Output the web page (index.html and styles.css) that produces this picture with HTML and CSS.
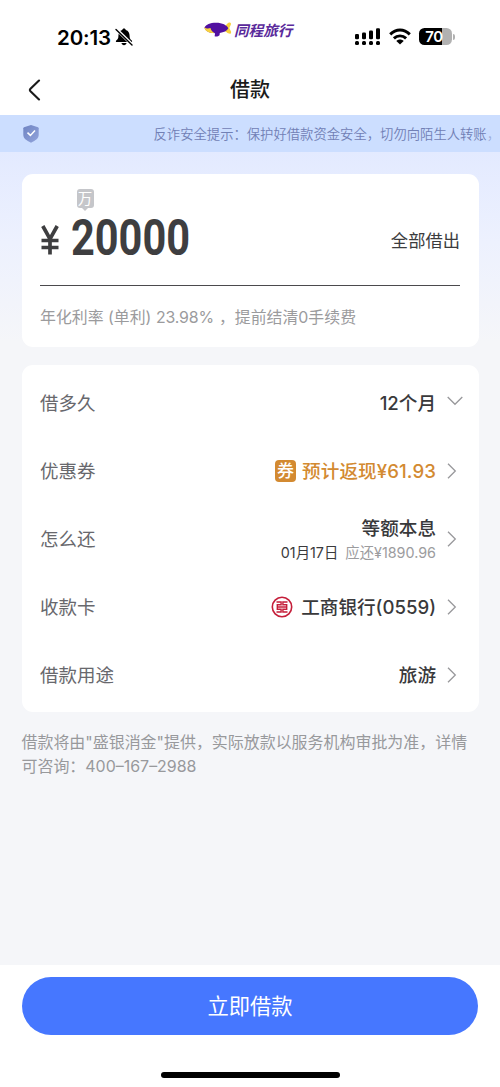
FILE: index.html
```html
<!DOCTYPE html>
<html lang="zh-CN">
<head>
<meta charset="utf-8">
<meta name="viewport" content="width=device-width, initial-scale=1">
<title>借款</title>
<link rel="stylesheet" href="styles.css">
</head>
<body>
<div class="app">
  <header class="status">
    <div class="status-left">
      <span class="clock">20:13</span>
      <svg class="bell" width="18" height="18" viewBox="0 0 18 18"><path d="M9 .6C8 .6 7.400 1.200 7.300 2 4.500 2.700 3.400 5 3.400 8c0 2.700-.8 3.300-2.200 4.500-.6.600-.4 1.600.6 1.600h14.400c1 0 1.200-1 .6-1.600-1.400-1.200-2.200-1.800-2.200-4.500 0-3-1.100-5.300-3.900-6C10.600 1.200 10 .6 9 .6zM6.500 15h5c-.2 1.300-1.200 2.200-2.500 2.200S6.700 16.300 6.500 15z" fill="#000"/><path d="M1.500 1.300l16 15.700" stroke="#fff" stroke-width="3.200"/><path d="M1 1.500l16 15.500" stroke="#000" stroke-width="1.400" stroke-linecap="round"/></svg>
    </div>
    <div class="brand">
      <svg width="28" height="15" viewBox="0 0 28 15"><path d="M19.500 6.500C22 4.500 22.500 1.200 25.300.6c1.700-.2 1.900 1 1.500 2.200L25.300 6l1.700 3.400c.5 1.600-.5 2.700-2 2.200-2.300-.7-3-2.600-5.500-3.200z" fill="#f8d13c"/><path d="M.5 5.500C2 2.500 6 .8 12 .8c6.500 0 10.800 2.400 12.300 5.500-1.200 2.700-4.600 4.200-8.500 4.600l-.3 2.400c-1.300 1.300-3.300 1.600-4.900 1l.5-3C5 11 1 9 .5 5.500z" fill="#5110a0"/><path d="M.3 5.200c1.800 1.500 4.200 1.300 6.200.9.400 2 1.600 3.700 4 5C5 11.300.8 9 .3 5.200z" fill="#f8d13c"/></svg>
      <span class="brand-name">同程旅行</span>
    </div>
    <div class="status-right">
      <svg width="26" height="18" viewBox="0 0 26 18"><g><rect x="0" y="6" width="4" height="5.200" rx="1.200"/><rect x="7" y="4.500" width="4" height="6.700" rx="1.200"/><rect x="14" y="2.500" width="4" height="8.700" rx="1.200"/><rect x="21" y=".2" width="4" height="11" rx="1.200"/><rect x="0" y="13" width="4" height="4" rx="1.500"/><rect x="7" y="13" width="4" height="4" rx="1.500"/><rect x="14" y="13" width="4" height="4" rx="1.500"/><rect x="21" y="13" width="4" height="4" rx="1.500"/></g></svg>
      <svg class="wifi" width="22" height="17" viewBox="0 0 22 17"><path d="M1.200 6.400C7 .6 15 .6 20.800 6.400M4.900 10.400c3.500-3.400 8.700-3.400 12.200 0" fill="none" stroke="#000" stroke-width="2.900"/><path d="M11 16.600L7.300 13c2-2 5.400-2 7.400 0z"/></svg>
      <div class="battery"><span>70</span></div><i class="battery-tip"></i>
    </div>
  </header>
  <nav class="nav">
    <svg class="back" width="14" height="22" viewBox="0 0 14 22"><path d="M11 1.500L2.500 9.700q-1.200 1.300 0 2.600l8.500 8.200" fill="none" stroke="#1b1b1b" stroke-width="2.100" stroke-linecap="round"/></svg>
    <h1 class="title">借款</h1>
  </nav>
  <div class="notice">
    <svg width="16" height="18" viewBox="0 0 16 18"><defs><linearGradient id="shield" x1="0" y1="0" x2="1" y2="1"><stop offset="0" stop-color="#6f84c2"/><stop offset="1" stop-color="#92a4dc"/></linearGradient></defs><path d="M8 0l7 2.300q.7.300.7 1v6.500c0 3.500-2.800 5.700-7.700 7.900C3.100 15.500.3 13.300.3 9.800V3.300q0-.7.700-1z" fill="url(#shield)"/><path d="M4.500 7.600l2.900 2.800 4.600-4.900" fill="none" stroke="#fff" stroke-width="1.500"/></svg>
    <p class="notice-text">反诈安全提示：保护好借款资金安全，切勿向陌生人转账<span class="fade">，</span></p>
  </div>
  <main class="content">
    <section class="card amount-card">
      <span class="unit">万</span>
      <div class="amount-row">
        <svg class="yen" width="18" height="30" viewBox="0 0 18 30"><path d="M1.800 1L9 14 16.200 1M9 13v16.500M.5 15.500h17M.5 22.500h17" fill="none" stroke="#3e3e40" stroke-width="3.700"/></svg>
        <span class="amount">20000</span>
        <span class="all">全部借出</span>
      </div>
      <p class="rate">年化利率 (单利) <span class="percent">23.98%</span><span class="comma">，</span>提前结清0手续费</p>
    </section>
    <section class="card list">
      <div class="row"><span class="label">借多久</span><span class="value">12个月</span><svg class="down" width="16" height="10" viewBox="0 0 16 10"><path d="M.7 1l7.300 7.300L15.300 1"/></svg></div>
      <div class="row"><span class="label">优惠券</span><span class="coupon">券</span><span class="value gold">预计返现¥61.93</span><svg class="arrow" width="10" height="16" viewBox="0 0 10 16"><path d="M1 .7L8.300 8 1 15.300"/></svg></div>
      <div class="row"><span class="label">怎么还</span><div class="repay"><span class="value">等额本息</span><span class="detail"><span class="date">01月17日</span><span class="due">应还¥1890.96</span></span></div><svg class="arrow" width="10" height="16" viewBox="0 0 10 16"><path d="M1 .7L8.300 8 1 15.300"/></svg></div>
      <div class="row"><span class="label">收款卡</span><svg class="bank" width="22" height="22" viewBox="0 0 22 22"><g fill="none" stroke="#c51e3a"><circle cx="11" cy="11" r="9.700" stroke-width="1.600"/><path stroke-width="1.400" d="M5.500 6h4.600v2.700H6.300v2.300h9.400V8.700h-3.800V6h4.600M6.300 11v2.300h3.800V16H5.500M15.700 11v2.300h-3.800V16h4.600"/></g></svg><span class="value">工商银行(0559)</span><svg class="arrow" width="10" height="16" viewBox="0 0 10 16"><path d="M1 .7L8.300 8 1 15.300"/></svg></div>
      <div class="row"><span class="label">借款用途</span><span class="value">旅游</span><svg class="arrow" width="10" height="16" viewBox="0 0 10 16"><path d="M1 .7L8.300 8 1 15.300"/></svg></div>
    </section>
    <p class="provider">借款将由"盛银消金"提供，实际放款以服务机构审批为准，详情<br>可咨询：<span class="phone">400–167–2988</span></p>
  </main>
  <footer class="footer">
    <button class="submit">立即借款</button>
    <div class="home"></div>
  </footer>
</div>
</body>
</html>
```

FILE: styles.css
```css
* { box-sizing: border-box; }
body { margin: 0; background: #fff; font-family: Inter, "Noto Sans CJK SC", sans-serif; color: #3a3a3c; }
svg { display: block; flex: none; }
p, h1 { margin: 0; }
.app { width: 500px; height: 1087px; display: flex; flex-direction: column; overflow: hidden; }

.status { height: 64px; display: grid; grid-template-columns: 204px 1fr 147px; background: #fff; }
.status-left { display: flex; padding: 26px 0 0 57px; }
.clock { font-size: 20.500px; line-height: 24px; font-weight: 600; color: #000; width: 55px; white-space: nowrap; letter-spacing: -.1px; }
.bell { margin: 2px 0 0 3px; }
.brand { display: flex; padding-top: 23px; }
.brand svg { margin-top: -1px; }
.brand-name { margin-left: 2px; font-size: 14.600px; line-height: 17px; font-weight: 700; font-style: italic; color: #5a2a9b; white-space: nowrap; }
.status-right { display: flex; padding: 28px 0 0 2px; }
.wifi { margin: 0 0 0 8px; }
.battery { width: 33px; height: 17px; margin-left: 8px; border-radius: 5.500px; background: linear-gradient(90deg, #000 71%, #b1b1b1 71%); color: #fff; font-size: 15px; line-height: 17px; font-weight: 600; text-align: center; }
.battery span { display: block; width: 30px; letter-spacing: -.5px; }
.battery-tip { width: 2px; height: 6px; margin: 6px 0 0 1px; border-radius: 0 3px 3px 0; background: #b1b1b1; }

.nav { height: 51px; display: grid; grid-template-columns: 60px 1fr 60px; background: #fff; }
.back { margin: 15px 0 0 28px; }
.title { font-size: 20px; line-height: 53px; font-weight: 500; text-align: center; color: #1b1b1b; }

.notice { height: 37px; background: #ccdeff; display: flex; align-items: center; padding-left: 22.500px; }
.notice-text { margin: 2px 0 0 115px; font-size: 13.330px; line-height: 37px; font-weight: 350; color: #7180b5; white-space: nowrap; }
.fade { opacity: .5; }

.content { flex: 1; padding: 22px 21.500px 0; background: linear-gradient(180deg, #e3eaff 0, #edf1fe 90px, #f5f6f9 190px); }
.card { background: #fff; border-radius: 11px; }
.amount-card { height: 173px; padding: 15px 18.500px 0; }
.unit { display: block; position: relative; width: 17px; height: 19px; margin-left: 36.500px; border-radius: 3px; background: #c5c6ca; color: #fff; font-size: 14.500px; line-height: 19px; text-align: center; }
.unit::after { content: ""; position: absolute; left: 5.500px; top: 19px; border: 3px solid transparent; border-top-color: #c5c6ca; border-bottom: 0; }
.amount-row { height: 78px; display: flex; border-bottom: 1.500px solid #4b4a4d; }
.yen { margin: 17px 0 0 1px; }
.amount { width: 250px; margin: 0 0 0 12px; font: 700 50px/60px Roboto, sans-serif; color: #3e3e40; transform: scaleX(.83); transform-origin: 0 50%; }
.all { margin-left: auto; font-size: 17.300px; line-height: 66px; white-space: nowrap; color: #3c3c3e; }
.rate { font-size: 15.900px; line-height: 24px; margin-top: 20px; color: #9b9b9d; white-space: nowrap; }
.percent { letter-spacing: -.15px; }
.comma { margin-left: 5px; }

.list { height: 347px; margin-top: 18px; padding: 4px 18.500px 0; }
.row { height: 68px; display: flex; align-items: center; }
.label { font-size: 18.500px; line-height: 28px; margin-right: auto; color: #68686d; }
.value { font-size: 18.600px; line-height: 28px; font-weight: 500; color: #39393b; white-space: nowrap; }
.row path { fill: none; }
.arrow { margin: 0 3px 0 11px; }
.arrow path, .down path { stroke: #98989b; stroke-width: 1.300; }
.down { margin: -4px -3px 0 11px; }
.coupon { width: 21px; height: 22px; margin-right: 6px; border-radius: 4px; background: #d38a31; color: #fff; font-size: 17px; line-height: 22px; font-weight: 500; text-align: center; }
.gold { color: #d38a31; letter-spacing: .1px; }
.repay { display: flex; flex-direction: column; align-items: flex-end; padding-top: 1px; }
.repay .value { line-height: 26px; }
.detail { display: flex; gap: 7px; font-size: 14.350px; line-height: 23px; white-space: nowrap; }
.due { color: #9c9c9e; }
.bank { margin-right: 8px; }
.provider { margin-top: 19px; font-size: 15.960px; line-height: 23.500px; color: #98999c; white-space: nowrap; }

.footer { height: 122px; background: #fff; padding: 12px 22px 0; }
.submit { display: block; width: 100%; height: 58px; padding: 1px 0 0; border: 0; border-radius: 29px; background: #4677ff; color: #fff; font: 400 21.300px/57px Inter, "Noto Sans CJK SC", sans-serif; }
.home { width: 179px; height: 6px; border-radius: 3px; margin: 37px auto 0; background: #000; }
```
